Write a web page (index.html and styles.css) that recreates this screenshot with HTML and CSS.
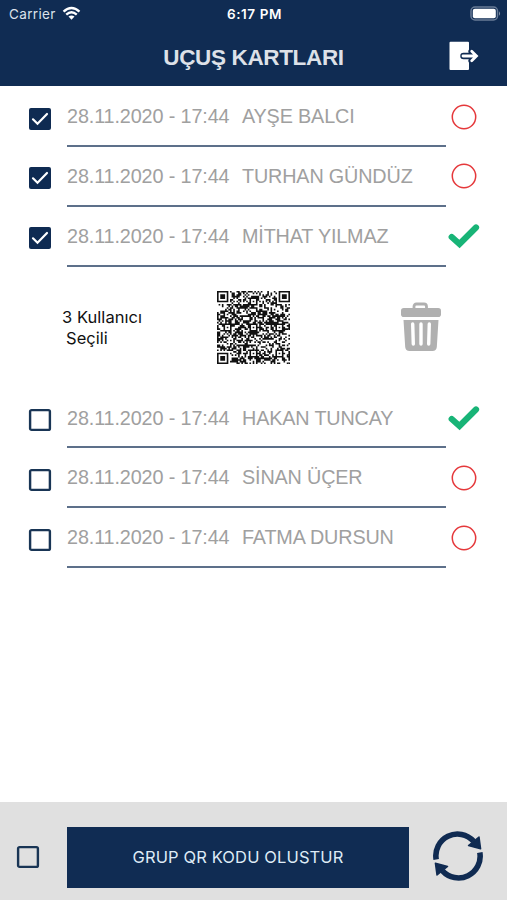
FILE: index.html
```html
<!DOCTYPE html>
<html lang="tr">
<head>
<meta charset="utf-8">
<title>Uçuş Kartları</title>
<link rel="stylesheet" href="styles.css">
</head>
<body>
<svg class="defs" width="0" height="0" aria-hidden="true">
  <symbol id="on" viewBox="0 0 24 24"><rect x="1" y="1" width="22" height="22" rx="2" fill="#0f2b52"/><path d="M5 12.3 9.5 16.8 19 7" fill="none" stroke="#fff" stroke-width="2.2" stroke-linecap="round"/></symbol>
  <symbol id="off" viewBox="0 0 24 24"><rect x="2.1" y="2.1" width="19.8" height="19.8" rx="1.5" fill="none" stroke="#193555" stroke-width="2.4"/></symbol>
  <symbol id="ring" viewBox="0 0 32 32"><circle cx="16" cy="16" r="11.7" fill="none" stroke="#e5383b" stroke-width="1.5"/></symbol>
  <symbol id="tick" viewBox="0 0 32 32"><path d="M3.7 17 11.500 24 28 7.500" fill="none" stroke="#18b477" stroke-width="6.2" stroke-linecap="round" stroke-linejoin="miter"/></symbol>
</svg>
<header class="header">
  <div class="status">
    <div class="carrier"><span>Carrier</span>
      <svg class="wifi" viewBox="0 0 20 16"><g fill="none" stroke="#fff" stroke-width="2.5"><path d="M1.5 6.1Q10-1.7 18.5 6.1"/><path d="M4.4 9.2Q10 4.1 15.6 9.2"/></g><path d="M6.8 11.3Q10 8.7 13.2 11.3L10 14.7Z" fill="#fff"/></svg>
    </div>
    <div class="clock">6:17 PM</div>
    <svg class="battery" viewBox="0 0 32 16"><rect x="1" y="1" width="26.5" height="13" rx="4" fill="none" stroke="#687b96" stroke-width="1.5"/><rect x="2.8" y="2.8" width="23" height="9.5" rx="2" fill="#fff"/><path d="M29 5.2q2.2 2.3 0 4.6z" fill="#8190a6"/></svg>
  </div>
  <div class="titlebar">
    <h1>UÇUŞ KARTLARI</h1>
    <svg class="exit" viewBox="0 0 30 30"><path d="M1.5.8H19a1 1 0 0 1 1 1V28a1 1 0 0 1-1 1H1.500a1 1 0 0 1-1-1V1.800a1 1 0 0 1 1-1z" fill="#fff"/><path d="M14.500 15H27M22.700 10.200 27.500 15 22.700 19.800" fill="none" stroke="#102b52" stroke-width="6.500" stroke-linecap="round"/><path d="M14 15H27M22.700 10.200 27.500 15 22.700 19.800" fill="none" stroke="#fff" stroke-width="2.800" stroke-linecap="round"/></svg>
  </div>
</header>
<main>
  <section class="list">
    <div class="row"><svg class="box"><use href="#on"/></svg><div class="entry"><span class="date">28.11.2020 - 17:44</span><span>AYŞE BALCI</span></div><svg class="state"><use href="#ring"/></svg></div>
    <div class="row"><svg class="box"><use href="#on"/></svg><div class="entry"><span class="date">28.11.2020 - 17:44</span><span>TURHAN GÜNDÜZ</span></div><svg class="state"><use href="#ring"/></svg></div>
    <div class="row"><svg class="box"><use href="#on"/></svg><div class="entry"><span class="date">28.11.2020 - 17:44</span><span>MİTHAT YILMAZ</span></div><svg class="state"><use href="#tick"/></svg></div>
  </section>
  <section class="summary">
    <p class="count">3 Kullanıcı<br><span class="second">Seçili</span></p>
    <svg class="qr" viewBox="0 0 45 45"><path id="qr" fill="#111"/></svg>
    <svg class="trash" viewBox="0 0 42 50"><path d="M14 7V4.500Q14 2 16.500 2H24Q26.500 2 26.500 4.500V7" fill="none" stroke="#b0b0b0" stroke-width="2.800"/><rect x="1" y="6" width="40" height="9" rx="2.800" fill="#b0b0b0"/><path d="M3.500 18H38.500L36.800 45Q36.400 49 32.500 49H9.500Q5.600 49 5.200 45Z" fill="#b0b0b0"/><path d="M12.700 22 13.300 42M21 22V42M29.300 22 28.700 42" stroke="#fff" stroke-width="3.400" stroke-linecap="round"/></svg>
  </section>
  <section class="list">
    <div class="row"><svg class="box"><use href="#off"/></svg><div class="entry"><span class="date">28.11.2020 - 17:44</span><span>HAKAN TUNCAY</span></div><svg class="state"><use href="#tick"/></svg></div>
    <div class="row"><svg class="box"><use href="#off"/></svg><div class="entry"><span class="date">28.11.2020 - 17:44</span><span>SİNAN ÜÇER</span></div><svg class="state"><use href="#ring"/></svg></div>
    <div class="row"><svg class="box"><use href="#off"/></svg><div class="entry"><span class="date">28.11.2020 - 17:44</span><span>FATMA DURSUN</span></div><svg class="state"><use href="#ring"/></svg></div>
  </section>
</main>
<footer class="footer">
  <svg class="box"><use href="#off"/></svg>
  <button class="create">GRUP QR KODU OLUSTUR</button>
  <svg class="sync" viewBox="0 0 50 50"><g id="arc"><path d="M3.200 28.500A21.600 21.600 0 0 1 40.500 10.200" fill="none" stroke="#102b52" stroke-width="5.600"/><path d="M46 6 47.600 17.800 35.500 14.500Z" fill="#102b52" stroke="#102b52" stroke-width="1.500" stroke-linejoin="round"/></g><use href="#arc" transform="rotate(180 25 25)"/></svg>
</footer>
<script src="qr.js"></script>
</body>
</html>
```
FILE: styles.css
```css
* { box-sizing: border-box; }
body { margin: 0; width: 507px; height: 900px; display: flex; flex-direction: column; background: #fff; font-family: "Liberation Sans", sans-serif; overflow: hidden; }
svg { display: block; flex: none; }
.defs { position: absolute; }
.header { height: 86px; background: #102c53; color: #fff; flex: none; }
.status { height: 28px; display: grid; grid-template-columns: 1fr auto 1fr; align-items: center; padding: 0 7px 0 9px; font: 13.5px/28px Inter, sans-serif; }
.carrier { display: flex; align-items: center; gap: 6px; color: #dce2ea; letter-spacing: .35px; }
.wifi { width: 19px; height: 15px; margin-top: -1px; }
.clock { font-weight: 600; font-size: 13.5px; letter-spacing: .6px; }
.battery { width: 32px; height: 16px; justify-self: end; margin: -1px -2px 0 0; }
.titlebar { height: 58px; display: grid; grid-template-columns: 1fr auto 1fr; align-items: center; padding-right: 28px; padding-left: 28px; }
h1 { grid-column: 2; margin: 2px 0 0; font-size: 22.5px; letter-spacing: -.35px; line-height: 28px; font-weight: 700; color: #dde1e8; white-space: nowrap; }
.exit { width: 30px; height: 30px; justify-self: end; margin-top: -2px; }
main { flex: 1; padding-top: 1px; }
.row { height: 59.85px; display: grid; grid-template-columns: 39px 379px 1fr; padding-left: 28px; }
.box { width: 24px; height: 24px; margin-top: 19.5px; }
.entry { height: 100%; display: flex; border-bottom: 2px solid #5d708a; padding-top: 17px; font-size: 19.8px; line-height: 24px; color: #a0a0a0; white-space: nowrap; letter-spacing: -.15px; }
.date { width: 175px; letter-spacing: -.12px; }
.state { width: 32px; height: 32px; margin: 13.500px 0 0 2px; }
.summary { height: 122.100px; display: flex; padding: 24px 65px 0 62px; align-items: flex-start; }
.count { width: 155px; margin: 16px 0 0; font: 16.500px/21px Inter, sans-serif; letter-spacing: .05px; color: #111; }
.second { margin-left: 4px; }
.qr { width: 73px; height: 73px; }
.trash { width: 42px; height: 50px; margin: 11px 0 0 auto; }
.footer { height: 98px; flex: none; background: #e0e0e0; display: flex; align-items: flex-start; padding: 25px 0 0 16px; }
.footer .box { margin-top: 18px; }
.create { width: 342px; height: 61px; margin-left: 27px; border: 0; padding: 0 0 2px; background: #102c53; color: #dfebf6; font: 16.500px Inter, sans-serif; letter-spacing: .12px; }
.sync { width: 50px; height: 50px; margin: 4px 0 0 24px; }
```
FILE: qr.js
```js
const N = 45;
let seed = 7321;
const random = () => (seed = (seed * 1103515245 + 12345) % 2147483648) / 2147483648;
const grid = Array.from({ length: N }, () => Array.from({ length: N }, () => random() < 0.53));
for (let i = 0; i < N; i++) grid[6][i] = grid[i][6] = i % 2 === 0;

function square(cx, cy, radius, isDark) {
  for (let y = -radius; y <= radius; y++)
    for (let x = -radius; x <= radius; x++)
      if (grid[cy + y] && cx + x >= 0 && cx + x < N)
        grid[cy + y][cx + x] = isDark(Math.max(Math.abs(x), Math.abs(y)));
}
for (const [x, y] of [[6, 22], [22, 6], [22, 22], [22, 38], [38, 22], [38, 38]])
  square(x, y, 2, d => d !== 1);
for (const [x, y] of [[3, 3], [41, 3], [3, 41]])
  square(x, y, 4, d => d < 2 || d === 3);

let d = "";
grid.forEach((row, y) => row.forEach((dark, x) => { if (dark) d += `M${x} ${y}h1v1h-1z`; }));
document.getElementById("qr").setAttribute("d", d);
```
